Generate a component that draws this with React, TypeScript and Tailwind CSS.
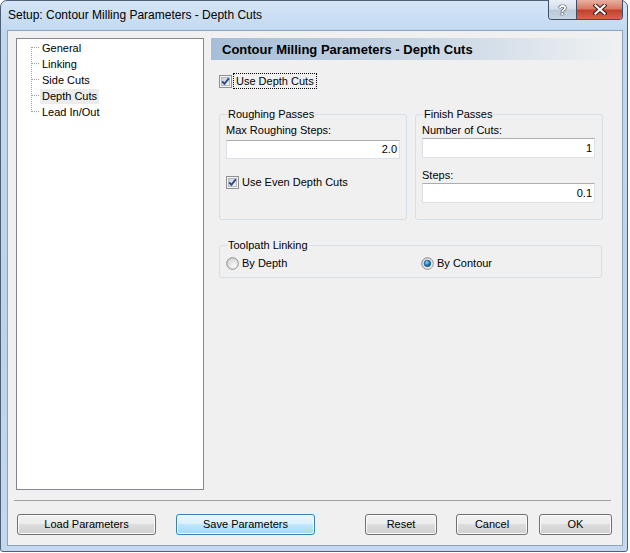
const ui = "font-['Liberation_Sans',Arial,sans-serif] text-[11px] leading-[13px] text-black";

function Check() {
  return (
    <svg width="13" height="13" viewBox="0 0 13 13" className="shrink-0">
      <defs>
        <linearGradient id="cbfill" x1="0" y1="0" x2="1" y2="1">
          <stop offset="0" stopColor="#c9d0d9" />
          <stop offset="1" stopColor="#f6f7f8" />
        </linearGradient>
      </defs>
      <rect x="0.5" y="0.5" width="12" height="12" fill="#f4f4f4" stroke="#8e8f8f" />
      <rect x="2.5" y="2.5" width="8" height="8" fill="url(#cbfill)" stroke="#b5bac1" />
      <path d="M3.2 6.3 L5.4 8.8 L9.8 3.4" fill="none" stroke="#2d4a86" strokeWidth="1.9" />
    </svg>
  );
}

function Radio({ on }: { on?: boolean }) {
  return (
    <svg width="13" height="13" viewBox="0 0 13 13" className="shrink-0">
      <defs>
        <radialGradient id="rdfill" cx="0.65" cy="0.7" r="0.7">
          <stop offset="0" stopColor="#fbfbfb" />
          <stop offset="1" stopColor="#d4d4d4" />
        </radialGradient>
        <radialGradient id="rddot" cx="0.4" cy="0.35" r="0.7">
          <stop offset="0" stopColor="#8ee0ff" />
          <stop offset="0.5" stopColor="#1f84c6" />
          <stop offset="1" stopColor="#0b4a80" />
        </radialGradient>
      </defs>
      <circle cx="6.5" cy="6.5" r="5.8" fill="url(#rdfill)" stroke="#8e8f8f" />
      {on && <circle cx="6.5" cy="6.5" r="3.3" fill="url(#rddot)" stroke="#1c4f7c" strokeWidth="0.6" />}
    </svg>
  );
}

function Field({ value, w, h }: { value: string; w: string; h: string }) {
  return (
    <div
      className={`${w} ${h} bg-white border border-[#dde1e7] border-t-[#abadb3] flex items-center justify-end pr-[2px]`}
    >
      {value}
    </div>
  );
}

function Btn({ label, w, focused }: { label: string; w: string; focused?: boolean }) {
  return (
    <div
      className={`${w} h-[21px] rounded-[3px] border flex items-center justify-center shadow-[inset_0_0_0_1px_#fbfbfb] ${
        focused
          ? "border-[#3c7fb1] bg-[linear-gradient(180deg,#eaf6fd_0%,#d9f0fc_50%,#bee6fd_50%,#a7d9f5_100%)]"
          : "border-[#707070] bg-[linear-gradient(180deg,#f2f2f2_0%,#ebebeb_50%,#dddddd_50%,#cfcfcf_100%)]"
      }`}
    >
      {label}
    </div>
  );
}

export default function App() {
  const tree = ["General", "Linking", "Side Cuts", "Depth Cuts", "Lead In/Out"];

  return (
    <div className={`w-[630px] h-[553px] bg-white ${ui}`}>
      <div className="w-[628px] h-[552px] flex flex-col rounded-t-[7px] rounded-b-[3px] border border-[#4d6078] bg-[linear-gradient(180deg,#d4e6f8_0%,#c0d7ef_6%,#bcd3ec_60%,#c4d9ef_100%)]">
        {/* title bar */}
        <div className="h-[29px] flex items-start justify-between shrink-0">
          <div className="pl-[7px] pt-[7px] text-[12px] leading-[14px]">
            Setup: Contour Milling Parameters - Depth Cuts
          </div>
          <div className="flex mr-[4px] -mt-[1px] h-[20px] rounded-b-[4px] overflow-hidden border border-t-0 border-[#3d4e66]">
            <div className="w-[28px] flex items-center justify-center bg-[linear-gradient(180deg,#e9eff6_0%,#d5dfea_45%,#bccbdb_55%,#c6d4e2_100%)] border-r border-[#3d4e66]">
              <span className="font-bold text-[14px] leading-[14px] text-white [text-shadow:0_0_1px_#222,0_0_1px_#222,0_0_1px_#222]">
                ?
              </span>
            </div>
            <div className="w-[45px] flex items-center justify-center bg-[linear-gradient(180deg,#eab0a2_0%,#d87a66_45%,#c3402a_55%,#d3654f_100%)]">
              <svg width="14" height="11" viewBox="0 0 14 11">
                <path d="M2.5 1.5 L11.5 9.5 M11.5 1.5 L2.5 9.5" stroke="#3a1a14" strokeWidth="4.2" strokeLinecap="square" />
                <path d="M2.5 1.5 L11.5 9.5 M11.5 1.5 L2.5 9.5" stroke="#ffffff" strokeWidth="2.2" strokeLinecap="square" />
              </svg>
            </div>
          </div>
        </div>

        {/* client area */}
        <div className="ml-[6px] mr-[4px] mb-[5px] flex-1 border border-[#8fa2b7] bg-[#f0f0f0] flex flex-col">
          <div className="flex mt-[7px] ml-[8px]">
            {/* tree */}
            <div className="w-[188px] h-[452px] bg-white border border-[#828790] flex pl-[14px]">
              <svg width="9" height="80" viewBox="0 0 9 80" className="shrink-0">
                <path
                  d="M0.5 8 V73 M1 8.5 H9 M1 24.5 H9 M1 40.5 H9 M1 56.5 H9 M1 72.5 H9"
                  stroke="#a0a0a0"
                  strokeWidth="1"
                  strokeDasharray="1 1"
                  fill="none"
                />
              </svg>
              <div className="flex flex-col">
                {tree.map((t) => (
                  <div key={t} className="h-[16px] flex items-center">
                    <span className={`px-[2px] h-[15px] mt-[2px] leading-[13px] flex items-center ${t === "Depth Cuts" ? "bg-[#ececec]" : ""}`}>
                      {t}
                    </span>
                  </div>
                ))}
              </div>
            </div>

            {/* right panel */}
            <div className="ml-[7px] w-[401px] flex flex-col">
              <div className="h-[22px] pl-[11px] flex items-center font-bold text-[13px] bg-[linear-gradient(90deg,#a6bed8_0%,#c6d4e3_50%,#edf0f2_100%)]">
                Contour Milling Parameters - Depth Cuts
              </div>

              <div className="mt-[13px] ml-[8px] h-[16px] flex items-center">
                <Check />
                <span className="ml-[1px] h-[16px] px-[2px] border border-dotted border-black flex items-center">
                  Use Depth Cuts
                </span>
              </div>

              <div className="mt-[19px] ml-[8px] flex gap-[8px]">
                <fieldset className="w-[188px] h-[112px] border border-[#d5dfe5] rounded-[3px] px-[6px]">
                  <legend className="ml-[1px] px-[1px] leading-[13px]">Roughing Passes</legend>
                  <div className="mt-[3px]">Max Roughing Steps:</div>
                  <div className="mt-[3px]">
                    <Field value="2.0" w="w-[174px]" h="h-[19px]" />
                  </div>
                  <div className="mt-[17px] flex items-center gap-[3px]">
                    <Check />
                    <span>Use Even Depth Cuts</span>
                  </div>
                </fieldset>
                <fieldset className="w-[188px] h-[112px] border border-[#d5dfe5] rounded-[3px] px-[6px]">
                  <legend className="ml-[1px] px-[1px] leading-[13px]">Finish Passes</legend>
                  <div className="mt-[3px]">Number of Cuts:</div>
                  <div className="mt-[1px]">
                    <Field value="1" w="w-[173px]" h="h-[20px]" />
                  </div>
                  <div className="mt-[11px]">Steps:</div>
                  <div className="mt-[1px]">
                    <Field value="0.1" w="w-[173px]" h="h-[20px]" />
                  </div>
                </fieldset>
              </div>

              <fieldset className="mt-[19px] ml-[8px] w-[383px] h-[39px] border border-[#d5dfe5] rounded-[3px] px-[6px]">
                <legend className="ml-[1px] px-[1px] leading-[13px]">Toolpath Linking</legend>
                <div className="mt-[5px] flex items-center">
                  <div className="w-[195px] flex items-center gap-[3px]">
                    <Radio />
                    <span>By Depth</span>
                  </div>
                  <div className="flex items-center gap-[3px]">
                    <Radio on />
                    <span>By Contour</span>
                  </div>
                </div>
              </fieldset>
            </div>
          </div>

          <div className="mt-[10px] ml-[6px] w-[597px] h-px bg-[#a0a0a0]" />

          <div className="mt-[13px] ml-[9px] flex">
            <Btn label="Load Parameters" w="w-[139px]" />
            <div className="ml-[20px]">
              <Btn label="Save Parameters" w="w-[139px]" focused />
            </div>
            <div className="ml-[50px]">
              <Btn label="Reset" w="w-[72px]" />
            </div>
            <div className="ml-[19px]">
              <Btn label="Cancel" w="w-[72px]" />
            </div>
            <div className="ml-[11px]">
              <Btn label="OK" w="w-[73px]" />
            </div>
          </div>
        </div>
      </div>
    </div>
  );
}
